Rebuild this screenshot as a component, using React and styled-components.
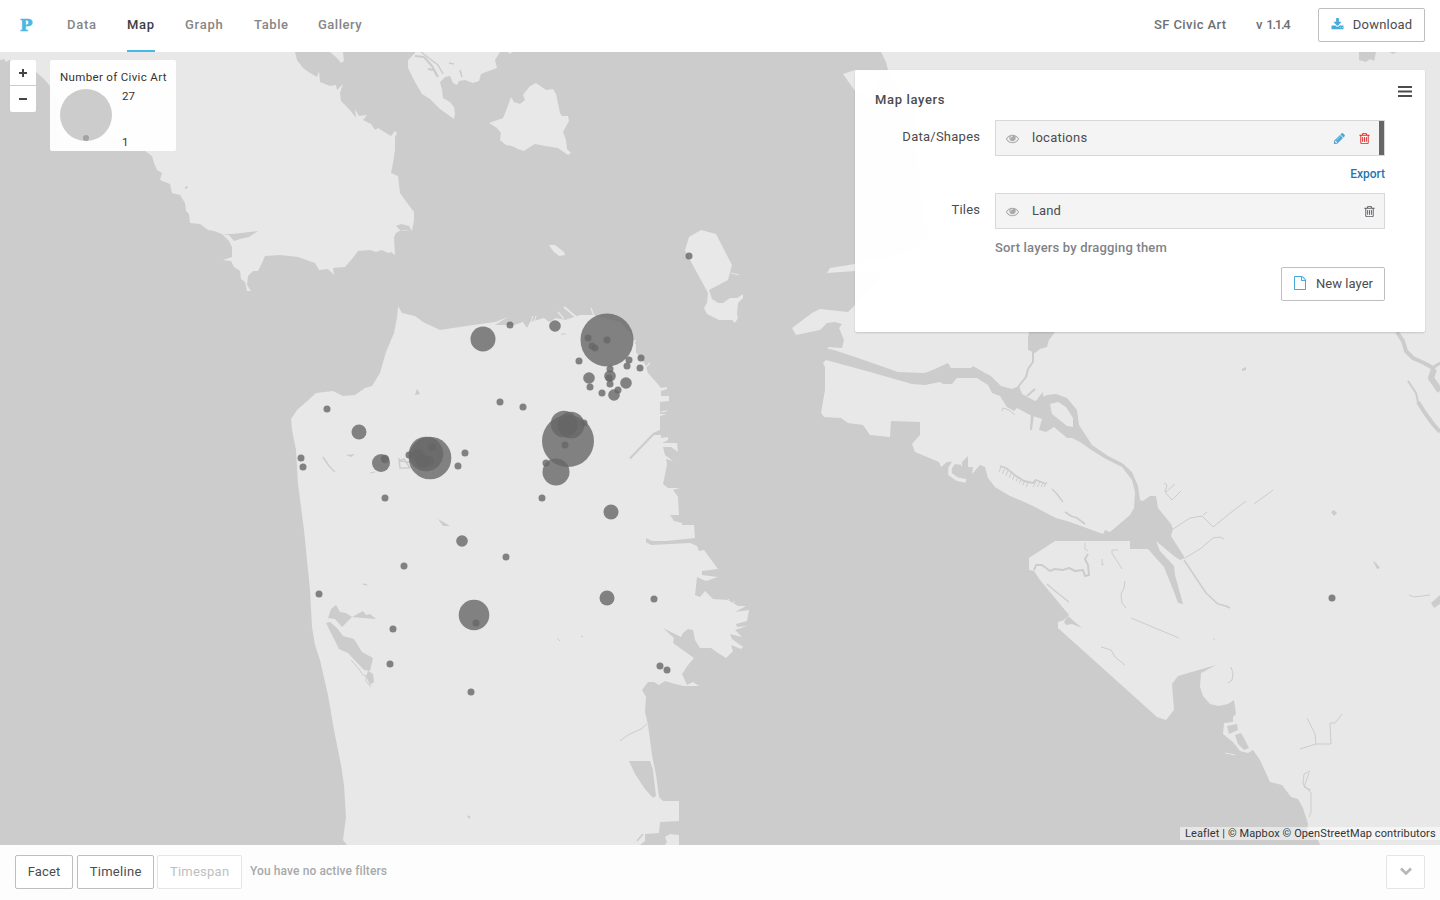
import React from "react";
import styled, { createGlobalStyle } from "styled-components";

const Global = createGlobalStyle`
  * { box-sizing: border-box; }
  body { margin: 0; background: #fff; overflow: hidden; }
  body, button { font-family: Roboto, "Liberation Sans", sans-serif; font-size: 13px; color: #4a4c50; }
`;

const Page = styled.div`
  width: 1440px;
  height: 900px;
  display: flex;
  flex-direction: column;
  background: #fdfdfd;
`;
const Label = styled.span`
  white-space: nowrap;
  letter-spacing: ${(p) => p.$track ?? 0.4}px;
  margin-right: ${(p) => -(p.$track ?? 0.4)}px;
`;

const Header = styled.header`
  height: 52px;
  flex: none;
  display: flex;
  align-items: stretch;
  justify-content: space-between;
  padding: 0 15px 0 20px;
  background: #fff;
`;
const Nav = styled.nav`
  display: flex;
  gap: 30px;
`;
const Logo = styled.div`
  width: 17px;
  height: 50px;
  font: bold 16.5px/51px "DejaVu Serif", serif;
  color: #4ab8e4;
  -webkit-text-stroke: 0.7px #4ab8e4;
`;
const NavItem = styled.a`
  width: ${(p) => p.$w}px;
  height: 52px;
  line-height: 49px;
  font-weight: 500;
  color: ${(p) => (p.$active ? "#3c3e42" : "#868686")};
  border-bottom: 2px solid ${(p) => (p.$active ? "#4ab8e4" : "transparent")};
`;
const Meta = styled.div`
  display: flex;
  align-items: center;
  height: 50px;
  color: #6e7073;
  font-weight: 500;
`;
const MetaItem = styled.span`
  width: ${(p) => p.$w}px;
  height: 50px;
  line-height: 49px;
  margin-right: 30px;
  white-space: nowrap;
`;
const Button = styled.button`
  width: ${(p) => p.$w}px;
  height: 34px;
  flex: none;
  display: flex;
  align-items: center;
  justify-content: center;
  gap: 9px;
  padding: 0 0 2px;
  border: 1px solid ${(p) => (p.$faded ? "#e4e5e6" : "#bcbec0")};
  border-radius: 2px;
  background: #fff;
  color: ${(p) => (p.$faded ? "#bdbfc0" : "#4a4c50")};
  svg { color: #4aa9dc; }
`;

const MapArea = styled.main`
  position: relative;
  height: 793px;
  flex: none;
  overflow: hidden;
  background: #ccc;
`;
const MapSvg = styled.svg`
  display: block;
`;
const ZoomControl = styled.div`
  position: absolute;
  left: 10px;
  top: 8px;
  width: 26px;
  border-radius: 2px;
  background: #fff;
`;
const ZoomButton = styled.div`
  height: 25px;
  display: grid;
  place-items: center;
  padding-top: 1px;
  color: #444;
  & + & { height: 27px; padding: 0; border-top: 1px solid #ccc; }
`;
const Legend = styled.div`
  position: absolute;
  left: 50px;
  top: 8px;
  width: 126px;
  height: 91px;
  padding: 9px 10px 0;
  border-radius: 2px;
  background: rgba(255, 255, 255, 0.95);
  font-size: 11.5px;
  line-height: 16px;
  color: #333;
`;
const LegendBody = styled.div`
  display: flex;
  gap: 10px;
  margin-top: 4px;
`;
const LegendValues = styled.div`
  display: flex;
  flex-direction: column;
  justify-content: space-between;
  height: 62px;
  margin-top: -1px;
`;
const Attribution = styled.div`
  position: absolute;
  right: 0;
  bottom: 5px;
  width: 260px;
  height: 13px;
  padding-left: 5px;
  background: rgba(255, 255, 255, 0.5);
  font-size: 11px;
  line-height: 13px;
  color: #333;
`;

const Panel = styled.section`
  position: absolute;
  right: 15px;
  top: 18px;
  width: 570px;
  height: 262px;
  padding: 20px;
  border-radius: 2px;
  background: rgba(255, 255, 255, 0.98);
  box-shadow: 0 1px 2px rgba(0, 0, 0, 0.15);
`;
const PanelHead = styled.div`
  display: flex;
  justify-content: space-between;
  height: 30px;
  line-height: 20px;
  margin-right: -7px;
  font-weight: 500;
  svg { margin-top: -6px; }
`;
const PanelRow = styled.div`
  display: grid;
  grid-template-columns: 105px 390px;
  column-gap: 15px;
`;
const RowLabel = styled.div`
  text-align: right;
  line-height: 33px;
`;
const Layer = styled.div`
  position: relative;
  height: 36px;
  display: flex;
  align-items: center;
  padding: 0 ${(p) => (p.$color ? 13.5 : 8.5)}px 0 10px;
  border: 1px solid #d8d8d8;
  background: #f4f4f4;
`;
const Swatch = styled.i`
  position: absolute;
  right: 0;
  top: 0;
  bottom: 0;
  width: 5px;
  background: #666;
`;
const LayerName = styled.span`
  flex: 1;
  margin-left: 13px;
  padding-bottom: 2px;
`;
const LayerTools = styled.span`
  display: flex;
  gap: 12px;
`;
const Export = styled.a`
  display: block;
  height: 37px;
  line-height: 37px;
  text-align: right;
  font-size: 12px;
  font-weight: 500;
  color: #1a78b4;
`;
const Hint = styled.div`
  height: 38px;
  line-height: 37px;
  font-weight: 500;
  color: #808386;
`;
const PanelAction = styled.div`
  display: flex;
  justify-content: flex-end;
  padding-right: 20px;
`;

const Footer = styled.footer`
  flex: 1;
  display: flex;
  align-items: flex-start;
  padding: 10px 15px 0;
`;
const FilterButtons = styled.div`
  display: flex;
  > :nth-child(2) { margin: 0 3px 0 4px; }
`;
const FilterNote = styled.div`
  flex: 1;
  padding-left: 8px;
  font-size: 12px;
  line-height: 32px;
  font-weight: 500;
  color: #a7a9aa;
`;

const Icon = ({ d, size = 13, color }) => (
  <svg width={size} height={size} viewBox="0 0 1792 1792" fill={color || "currentColor"}>
    <path d={d} />
  </svg>
);
const DOWNLOAD = "M1344 1344q0-26-19-45t-45-19-45 19-19 45 19 45 45 19 45-19 19-45zm256 0q0-26-19-45t-45-19-45 19-19 45 19 45 45 19 45-19 19-45zm128-224v320q0 40-28 68t-68 28h-1472q-40 0-68-28t-28-68v-320q0-40 28-68t68-28h465l135 136q58 56 136 56t136-56l136-136h464q40 0 68 28t28 68zm-325-569q17 41-14 70l-448 448q-18 19-45 19t-45-19l-448-448q-31-29-14-70 17-39 59-39h256v-448q0-26 19-45t45-19h256q26 0 45 19t19 45v448h256q42 0 59 39z";
const EYE = "M1664 960q-152-236-381-353 61 104 61 225 0 185-131.500 316.500t-316.500 131.500-316.500-131.500-131.500-316.500q0-121 61-225-229 117-381 353 133 205 333.500 326.500t434.500 121.500 434.500-121.500 333.500-326.500zm-720-384q0-20-14-34t-34-14q-125 0-214.500 89.500t-89.500 214.500q0 20 14 34t34 14 34-14 14-34q0-86 61-147t147-61q20 0 34-14t14-34zm848 384q0 34-20 69-140 230-376.500 368.500t-499.500 138.500-499.500-139-376.500-368q-20-35-20-69t20-69q140-229 376.500-368t499.500-139 499.500 139 376.500 368q20 35 20 69z";
const PENCIL = "M491 1536l91-91-235-235-91 91v107h128v128h107zm523-928q0-22-22-22-10 0-17 7l-542 542q-7 7-7 17 0 22 22 22 10 0 17-7l542-542q7-7 7-17zm-54-192l416 416-832 832h-416v-416zm683 96q0 53-37 90l-166 166-416-416 166-165q36-38 90-38 53 0 91 38l235 234q37 39 37 91z";
const TRASH = "M704 736v576q0 14-9 23t-23 9h-64q-14 0-23-9t-9-23v-576q0-14 9-23t23-9h64q14 0 23 9t9 23zm256 0v576q0 14-9 23t-23 9h-64q-14 0-23-9t-9-23v-576q0-14 9-23t23-9h64q14 0 23 9t9 23zm256 0v576q0 14-9 23t-23 9h-64q-14 0-23-9t-9-23v-576q0-14 9-23t23-9h64q14 0 23 9t9 23zm128 724v-948h-896v948q0 22 7 40.500t14.500 27 10.500 8.500h832q3 0 10.500-8.500t14.500-27 7-40.500zm-672-1076h448l-48-117q-7-9-17-11h-317q-10 2-17 11zm928 32v64q0 14-9 23t-23 9h-96v948q0 83-47 143.500t-113 60.500h-832q-66 0-113-58.500t-47-141.500v-952h-96q-14 0-23-9t-9-23v-64q0-14 9-23t23-9h309l70-167q15-37 54-63t79-26h320q40 0 79 26t54 63l70 167h309q14 0 23 9t9 23z";
const FILE = "M1596 380q28 28 48 76t20 88v1152q0 40-28 68t-68 28h-1344q-40 0-68-28t-28-68v-1600q0-40 28-68t68-28h896q40 0 88 20t76 48zm-444-244v376h376q-10-29-22-41l-313-313q-12-12-41-22zm384 1528v-1024h-416q-40 0-68-28t-28-68v-416h-768v1536h1280z";

const LAND = [
  // Marin headlands
  "0,52 0,60 4,59 6,62 9,60 20,61 36,72 44,79 50,86 62,103 75,118 104,130 112,137 121,146 127,151 145,151 152,156 154,163 157,170 162,173 160,180 170,184 172,193 180,195 185,203 186,211 189,214 190,223 200,224 208,230 214,231 222,234 229,241 232,247 232,257 223,260 231,261 234,267 240,271 241,279 245,282 247,291 251,291 247,285 248,276 253,271 258,271 262,263 265,256 280,255 298,257 315,263 319,270 328,269 334,275 333,268 345,267 352,259 358,251 370,250 376,252 382,250 388,253 391,252 395,255 394,237 396,233 401,230 404,231 412,231 414,220 414,212 405,200 400,193 398,176 391,173 393,163 395,150 395,137 397,133 395,131 391,136 378,128 375,130 371,124 363,120 367,115 359,116 355,109 356,118 350,110 341,101 340,93 343,84 337,90 336,85 330,86 320,82 319,71 317,77 310,73 303,68 297,60 295,52",
  "330,52 337,58 341,63 344,61 343,52",
  // Belvedere and Tiburon
  "415,53 408,60 408,68 415,82 422,94 430,99 440,109 454,119 455,113 454,107 450,102 443,98 442,90 440,82 445,77 450,76 453,83 457,85 459,81 465,80 473,83 479,81 481,74 486,72 497,68 495,60 500,52 415,52",
  "508,52 510,54 512,52",
  // Angel Island
  "489,123 503,118 506,111 511,97 514,102 520,104 525,100 523,95 526,91 530,86 536,83 546,90 553,89 556,94 560,113 562,116 568,116 569,121 563,132 566,140 567,149 571,153 568,155 558,148 545,146 535,144 530,147 524,151 518,149 512,146 506,145 500,140 501,133 497,128",
  "549,245 555,245 564,252 565,255 559,256 553,251",
  // Treasure Island and Yerba Buena
  "685,250 689,237 701,230 716,234 732,265 728,280 709,290 712,299 718,303 723,303 730,298 737,298 743,294 743,298 738,303 737,314 738,318 735,323 732,320 719,320 707,314 704,308 707,303 708,293 690,260",
  // San Francisco
  "398,306 402,313 415,316 423,322 440,330 466,326 495,322 508,317 495,325 514,325 523,322 527,328 530,322 544,318 549,322 556,318 565,320 580,315 592,315 600,317 620,322 630,333 636,345 636,352 645,364 648,373 656,382 661,388 667,387 667,389 661,391 661,396 669,396 669,401 660,402 660,414 667,414 660,416 660,430 653,433 629,458 631,459 654,435 661,435 661,438 668,437 668,440 662,443 677,443 678,452 671,447 663,447 665,455 673,461 666,459 667,464 665,475 663,484 668,488 680,488 673,490 678,497 679,515 670,515 674,521 682,523 682,525 694,525 695,538 666,541 652,541 646,538 646,542 651,545 690,543 697,546 699,551 704,550 718,569 702,571 702,575 718,577 706,581 697,577 696,586 695,595 700,597 705,591 713,599 728,600 738,606 746,606 735,612 749,610 747,621 736,624 737,627 747,626 735,630 742,637 730,634 732,639 743,647 741,649 731,645 733,651 726,658 718,653 711,648 700,648 695,640 693,630 688,629 683,633 681,637 663,628 674,638 673,643 694,658 688,665 682,674 687,685 693,682 699,686 684,686 675,684 665,681 659,685 654,682 648,682 642,690 646,697 645,712 648,725 652,755 656,775 659,797 663,801 679,801 679,821 660,822 659,833 645,834 645,841 640,845 347,845 343,840 346,817 344,785 341,765 334,730 328,695 325,682 320,660 315,645 312,627 310,590 307,560 304,530 298,484 296,450 292,430 291,419 297,410 305,403 316,393 333,391 343,396 355,395 365,388 372,386 380,373 386,352 394,333 397,318",
  "679,835 670,834 665,837 667,842 665,845 679,845",
  // East Bay mainland
  "881,52 886,62 888,70 900,90 915,110 920,190 928,235 910,252 855,264 830,268 827,273 855,271 885,274 860,300 848,312 820,309 812,313 792,328 796,335 820,330 827,323 835,322 842,324 839,328 844,340 842,348 828,348 840,352 858,358 898,372 925,373 935,369 948,363 951,368 971,368 973,366 985,373 991,376 1001,386 1012,389 1019,386 1022,394 1035,401 1047,395 1056,394 1067,398 1077,410 1079,425 1092,445 1108,456 1122,463 1132,472 1138,486 1140,500 1143,501 1150,496 1156,496 1158,508 1171,524 1173,529 1171,536 1185,558 1180,560 1174,556 1156,541 1160,551 1174,566 1175,575 1183,604 1178,603 1174,592 1164,567 1148,549 1130,549 1130,541 1055,541 1029,558 1029,570 1034,571 1040,580 1069,615 1064,620 1058,622 1058,628 1157,717 1166,720 1174,710 1172,684 1178,676 1216,665 1201,673 1200,687 1203,696 1210,704 1219,706 1228,704 1234,700 1236,714 1233,717 1233,722 1224,723 1223,734 1233,742 1240,751 1248,753 1253,750 1260,760 1270,782 1282,785 1291,797 1298,799 1303,808 1308,824 1307,830 1318,840 1320,845 1440,845 1440,52",
  "843,74 855,70 880,71 870,100 855,91",
  // Alameda
  "823,363 826,360 870,372 912,384 925,385 940,382 943,384 952,384 957,378 977,378 988,385 992,393 1000,396 1007,407 1014,411 1017,408 1030,415 1042,419 1039,430 1046,432 1054,427 1067,438 1072,438 1080,442 1090,449 1104,458 1122,467 1132,480 1135,492 1134,508 1130,515 1110,532 1105,530 1103,534 1092,530 1070,522 1056,518 1050,515 1035,507 1022,501 1010,496 995,487 988,478 985,467 980,465 972,474 973,467 968,467 968,456 962,462 962,467 958,461 947,462 941,467 939,462 915,452 912,444 920,435 920,422 891,421 890,437 870,435 863,425 848,423 841,418 824,417 821,413 825,390 825,367",
  "1050,404 1058,402 1066,407 1073,418 1073,427 1067,426 1052,414",
];
const WATER = [
  "629,761 650,761 653,770 656,796 653,798 645,789 635,774",
  "1029,332 1055,332 1049,340 1047,347 1040,349 1035,353 1028,350 1028,338",
  "328,618 331,609 336,605 340,612 346,613 352,617 342,627 335,619",
  "326,623 330,622 337,628 343,636 354,639 362,652 373,658 370,671 364,670 348,653 339,649",
  "368,671 373,674 374,682 370,685 366,676",
  "352,617 363,611 366,615 370,614 376,619 363,618",
  "222,234 232,234 258,231 249,237 240,239 234,241 229,235",
  "396,226 401,224 409,226 412,231 400,230",
  "415,395 417,389 420,394",
  "346,455 355,454 351,457",
  "438,519 445,523 450,526 443,526",
  "1130,541 1138,543 1138,549 1130,549",
  "1064,622 1068,616 1082,628 1072,624 1066,625",
  "1227,726 1237,724 1238,730 1229,734",
  "1235,735 1241,733 1245,740 1249,748 1244,750 1238,744",
  "1359,52 1376,52 1374,61 1370,59 1366,62 1359,60",
  "1389,52 1397,52 1393,54",
  "1331,512 1334,510 1337,513 1334,516",
  "1373,561 1376,563 1380,568 1377,569",
  "1431,603 1440,595 1440,604 1434,608",
  "1242,369 1246,367 1246,370 1242,371",
  "185,187 187,186 188,188 185,189",
  "1038,398 1043,392 1044,404 1036,403",
  "1031,414 1034,414 1032,430 1030,430",
];
const CREEKS = [
  [1, "351,660 358,668 363,675 366,676 366,681 371,687"],
  [1, "620,741 628,735 641,729 647,724"],
  [1.5, "637,841 643,834"],
  [1.4, "323,457 329,466 335,472"],
  [1.4, "399,458 400,468 410,468 404,459 399,461 412,462"],
  [1, "370,473 375,472"],
  [1, "557,638 560,641"],
  [1, "581,636 583,637"],
  [2, "468,816 470,818"],
  [1.5, "363,584 367,585"],
  [4, "1397,332 1403,341 1406,351 1413,358 1424,363 1435,369"],
  [6, "1434,369 1431,378 1440,391"],
  [3, "1434,367 1440,363"],
  [2, "1408,381 1416,393 1418,402"],
  [4, "1418,402 1425,413 1433,424 1440,432"],
  [2, "1033,352 1033,362 1028,369 1026,377 1018,387"],
  [2, "1027,396 1035,389"],
  [1.8, "1000,466 1006,468 1016,476 1024,481 1033,483 1036,480 1046,484"],
  [1.4, "1052,489 1057,494 1063,502"],
  [1.6, "1065,512 1071,516 1077,518 1085,524"],
  [1, "1002,411 1003,408 1009,410 1015,415"],
  [1, "1131,618 1179,638"],
  [2, "1034,570 1036,565 1042,565 1050,571 1055,569 1063,570 1069,568 1075,571 1083,570 1085,576 1089,575 1088,565 1085,559 1088,554"],
  [1, "1085,543 1085,549 1088,551"],
  [1, "1118,550 1112,550 1112,553 1122,569"],
  [1, "1102,559 1102,565 1104,564"],
  [1, "1125,581 1124,588 1121,594 1122,603 1126,608"],
  [1.2, "1047,584 1055,591 1069,602"],
  [1, "1101,647 1111,650 1115,657 1125,665"],
  [1.4, "1184,560 1206,593 1218,604 1226,606 1230,608"],
  [1, "1185,558 1200,549 1213,538 1220,537 1224,539"],
  [1, "1173,529 1190,518 1202,516 1213,527 1218,523 1229,514 1246,501"],
  [1, "1203,515 1207,512"],
  [1, "1254,504 1273,490"],
  [1, "1164,483 1167,485 1165,492 1172,500 1181,491"],
  [1, "1166,492 1175,484"],
  [1, "1231,667 1233,673 1232,680 1228,683"],
  [1, "1307,718 1315,734 1316,744 1331,744 1330,723 1335,723 1342,714"],
  [1, "1316,744 1300,749"],
  [1, "1310,771 1304,774 1303,784 1311,793 1311,812 1309,817"],
  [1, "1309,773 1304,787 1311,790"],
  [1, "1409,595 1414,597 1430,595"],
  [2, "415,56 424,57 432,66 438,77"],
  [1.5, "421,52 430,59 438,65 443,74"],
  [2, "428,69 434,70 437,76"],
  [1.5, "460,70 462,77"],
  [1.5, "449,63 454,64"],
  [1, "561,334 566,334"],
  [1, "1213,638 1215,640"],
];
const SPITS = [
  [1, "731,273 739,275"],
  [2, "564,307 576,317"],
  [1.2, "591,308 594,316"],
  [1.2, "558,312 564,319"],
  [1, "530,325 533,316"],
  [1, "533,325 536,316"],
  [1.2, "631,345 636,340"],
  [1.2, "645,368 650,363"],
  [1.2, "661,412 667,411"],
  [1, "725,604 729,599"],
  [1, "731,605 735,601"],
  [1, "1225,753 1235,755"],
  [2, "828,348 841,349"],
  [3.5, "960,463 954,462 950,468 950,474 957,479 966,481"],
];
const PIERS = Array.from({ length: 9 }, (_, i) => [1001 + i * 3.4, 467 + i * 1.9]);

const SITES = [
  [607, 340, 26.5], [568, 441, 26], [430, 458, 21.3], [426, 454, 17.3], [474, 615, 15.3],
  [483, 339, 12.5], [556, 472, 13.5], [564, 424, 13.3], [571, 425, 13.3], [568, 425, 10],
  [359, 432, 7.5], [381, 463, 9], [611, 512, 7.5], [607, 598, 7.5],
  [555, 326, 5.8], [462, 541, 5.8], [589, 378, 5.8], [610, 376, 5.8], [626, 383, 5.8], [614, 395, 5.8], [385, 459, 4.2],
  [588, 338], [592, 346], [595, 348], [607, 340], [510, 325], [579, 361], [629, 360], [641, 358], [627, 366], [640, 368],
  [610, 369], [609, 378], [610, 384], [590, 387], [602, 393], [618, 390], [584, 423], [565, 445], [546, 463], [542, 498],
  [500, 402], [523, 407], [327, 409], [301, 458], [303, 467], [465, 453], [458, 466], [385, 498], [404, 566], [506, 557],
  [319, 594], [393, 629], [390, 664], [476, 623], [471, 692], [654, 599], [660, 666], [667, 670], [689, 256], [1332, 598],
  [409, 455], [418, 455, 6], [423, 461, 7], [432, 447, 4], [429, 461, 5],
];

function BaseMap() {
  return (
    <MapSvg width="1440" height="793" viewBox="0 52 1440 793">
      <g fill="#e8e8e8">{LAND.map((p) => <polygon key={p} points={p} />)}</g>
      <g fill="#ccc">{WATER.map((p) => <polygon key={p} points={p} />)}</g>
      <g fill="none" stroke="#ccc" strokeLinejoin="round">
        {CREEKS.map(([w, p]) => <polyline key={p} strokeWidth={w} points={p} />)}
        {PIERS.map(([x, y]) => <path key={x} d={`M${x} ${y}l-2 5`} />)}
        {[1036, 1040, 1044, 1047].map((x) => <path key={x} d={`M${x} 482l-3 5`} />)}
      </g>
      <g fill="none" stroke="#e8e8e8">
        {SPITS.map(([w, p]) => <polyline key={p} strokeWidth={w} points={p} />)}
      </g>
      <g fill="#666" fillOpacity="0.8">
        {SITES.map(([x, y, r = 3.5], i) => <circle key={i} cx={x} cy={y} r={r} />)}
      </g>
    </MapSvg>
  );
}

export default function App() {
  return (
    <Page>
      <Global />
      <Header>
        <Nav>
          <Logo>P</Logo>
          <NavItem $w={30}><Label $track={0.7}>Data</Label></NavItem>
          <NavItem $w={28} $active><Label $track={0.7}>Map</Label></NavItem>
          <NavItem $w={39}><Label $track={0.75}>Graph</Label></NavItem>
          <NavItem $w={34}><Label $track={0.6}>Table</Label></NavItem>
          <NavItem $w={45}><Label $track={0.5}>Gallery</Label></NavItem>
        </Nav>
        <Meta>
          <MetaItem $w={72}><Label>SF Civic Art</Label></MetaItem>
          <MetaItem $w={32}><Label $track={0.6}>v </Label><Label $track={-1.25}>1.1.4</Label></MetaItem>
          <Button $w={107}><Icon d={DOWNLOAD} /><Label $track={0.2}>Download</Label></Button>
        </Meta>
      </Header>
      <MapArea>
        <BaseMap />
        <ZoomControl>
          <ZoomButton><svg width="8" height="8"><path d="M4 0v8M0 4h8" stroke="currentColor" strokeWidth="2" /></svg></ZoomButton>
          <ZoomButton><svg width="8" height="8"><path d="M0 4h8" stroke="currentColor" strokeWidth="2" /></svg></ZoomButton>
        </ZoomControl>
        <Legend>
          <Label $track={0.34}>Number of Civic Art</Label>
          <LegendBody>
            <svg width="52" height="52">
              <circle cx="26" cy="26" r="26" fill="#ccc" />
              <circle cx="26" cy="49" r="3" fill="#a3a3a3" />
            </svg>
            <LegendValues><Label $track={0}>27</Label><Label $track={0}>1</Label></LegendValues>
          </LegendBody>
        </Legend>
        <Panel>
          <PanelHead>
            <Label $track={0.65}>Map layers</Label>
            <svg width="14" height="14"><path d="M0 3h14M0 7.500h14M0 12h14" stroke="#4a4c50" strokeWidth="2" /></svg>
          </PanelHead>
          <PanelRow>
            <RowLabel><Label $track={0.25}>Data/Shapes</Label></RowLabel>
            <div>
              <Layer $color>
                <Icon d={EYE} color="#aaa" />
                <LayerName><Label $track={0.25}>locations</Label></LayerName>
                <LayerTools><Icon d={PENCIL} color="#4aa9dc" /><Icon d={TRASH} color="#e02828" /></LayerTools>
                <Swatch />
              </Layer>
              <Export><Label $track={-0.05}>Export</Label></Export>
            </div>
          </PanelRow>
          <PanelRow>
            <RowLabel><Label $track={0.2}>Tiles</Label></RowLabel>
            <div>
              <Layer>
                <Icon d={EYE} color="#aaa" />
                <LayerName><Label $track={0.1}>Land</Label></LayerName>
                <Icon d={TRASH} color="#5a5c60" />
              </Layer>
              <Hint><Label $track={0.18}>Sort layers by dragging them</Label></Hint>
            </div>
          </PanelRow>
          <PanelAction>
            <Button $w={104}><Icon d={FILE} size={14} /><Label $track={0.05}>New layer</Label></Button>
          </PanelAction>
        </Panel>
        <Attribution><Label $track={0.11}>Leaflet | © Mapbox © OpenStreetMap contributors</Label></Attribution>
      </MapArea>
      <Footer>
        <FilterButtons>
          <Button $w={58}><Label $track={0.1}>Facet</Label></Button>
          <Button $w={77}><Label $track={0.3}>Timeline</Label></Button>
          <Button $w={85} $faded><Label $track={0.25}>Timespan</Label></Button>
        </FilterButtons>
        <FilterNote><Label $track={0.1}>You have no active filters</Label></FilterNote>
        <Button $w={39} $faded>
          <svg width="12" height="8"><path d="M1 1.500l5 5 5-5" fill="none" stroke="#b4b6b7" strokeWidth="2.600" /></svg>
        </Button>
      </Footer>
    </Page>
  );
}
